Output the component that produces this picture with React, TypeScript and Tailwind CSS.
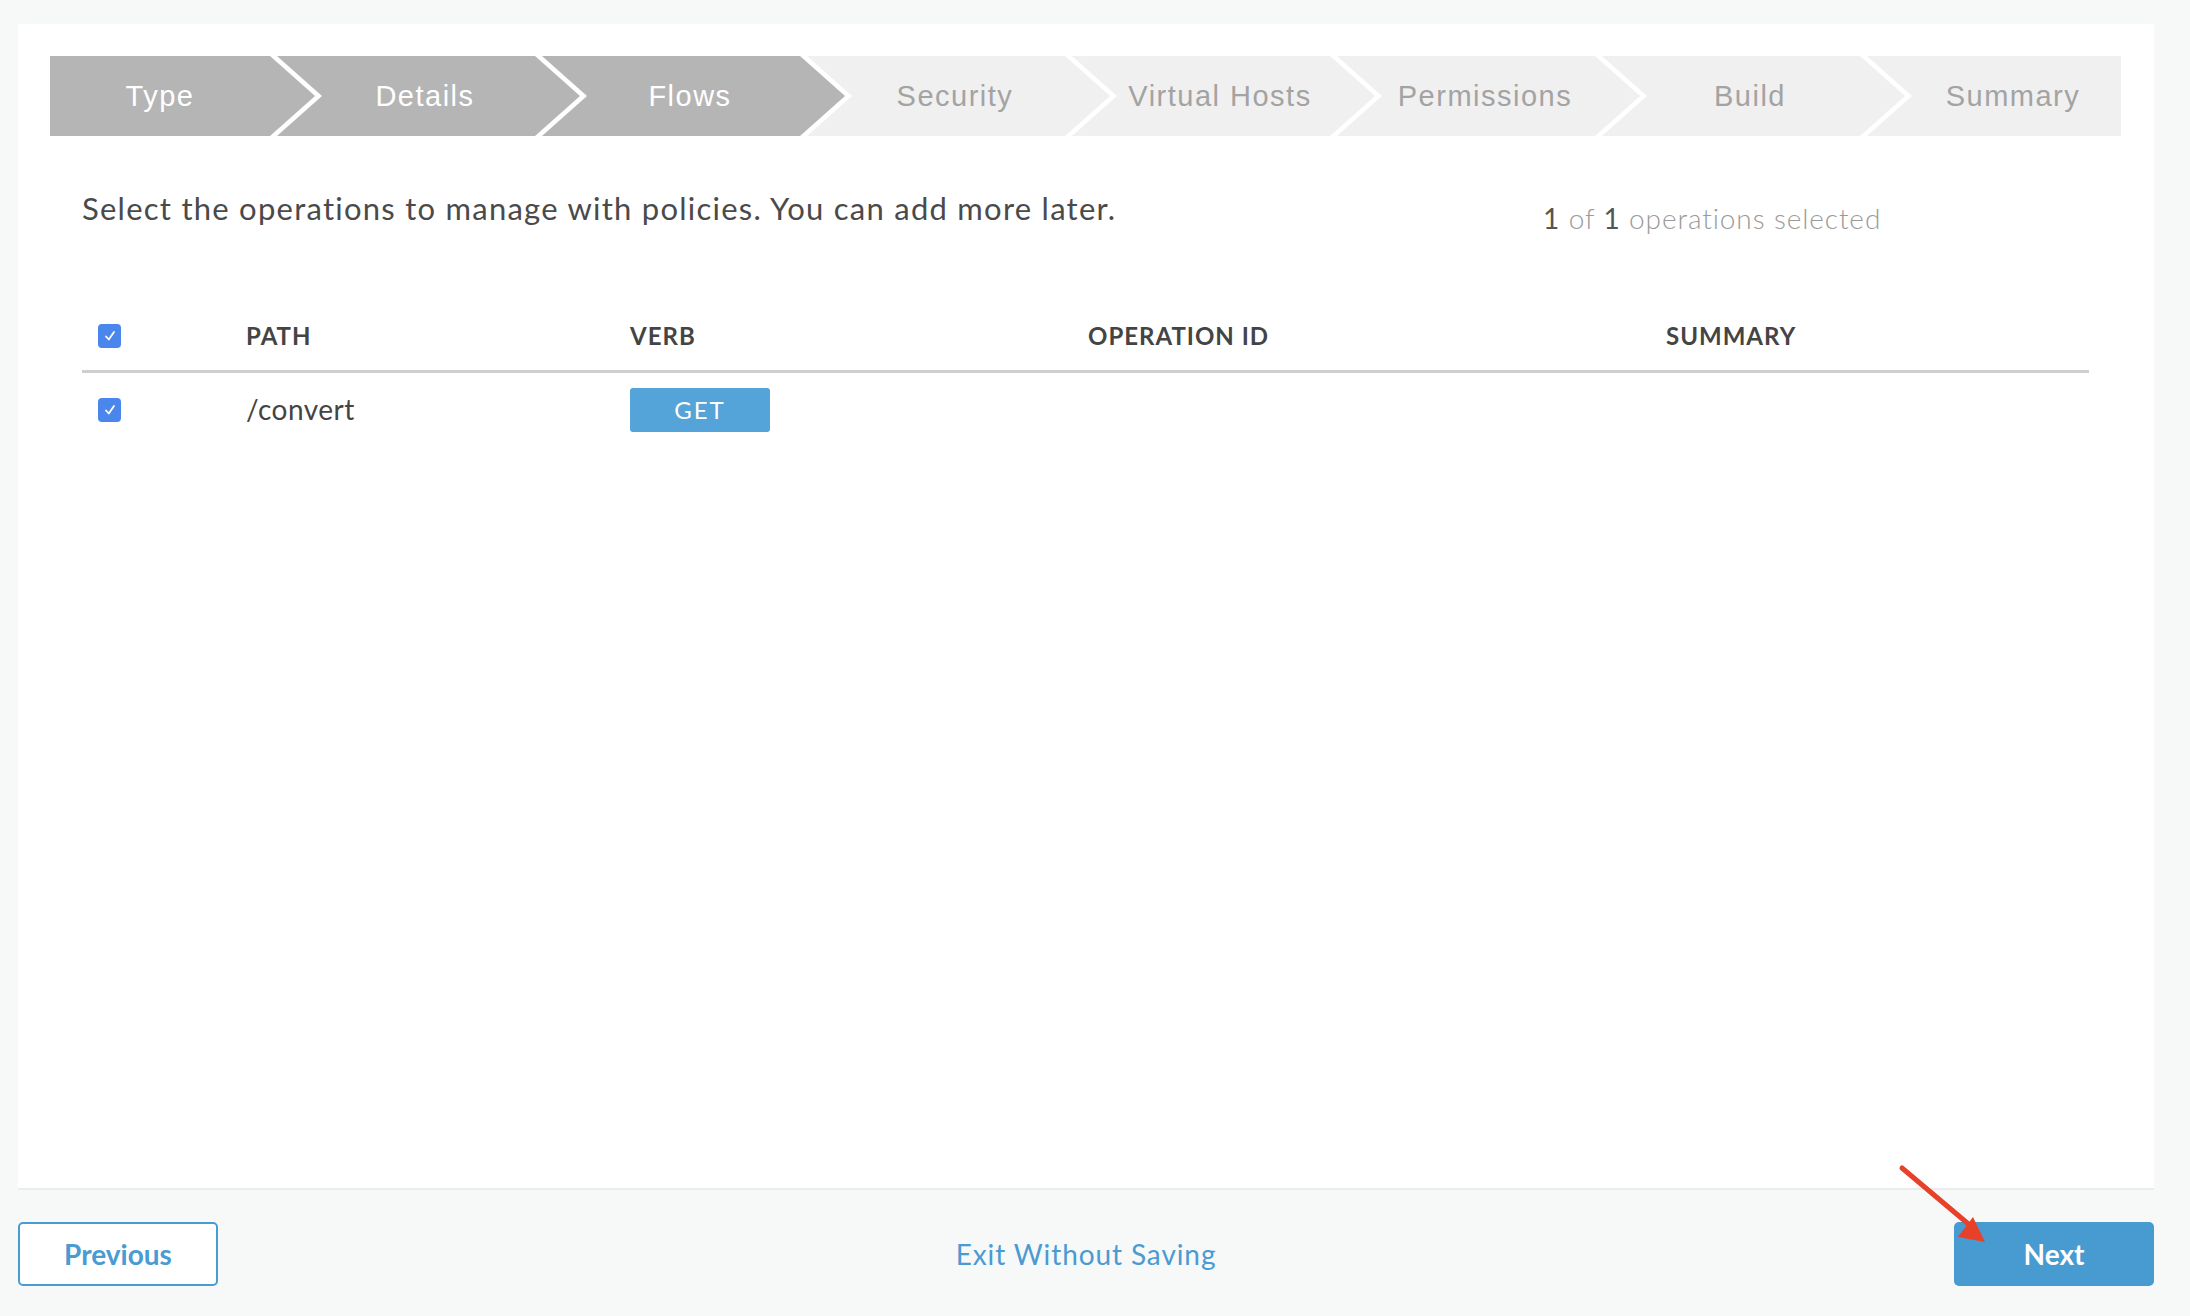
import React from 'react';

const steps = ['Type', 'Details', 'Flows', 'Security', 'Virtual Hosts', 'Permissions', 'Build', 'Summary'];
const doneCount = 3;

const CheckBox = () => (
  <div className="w-[23px] h-[24px] rounded-[4px] bg-[#4a86ec] flex items-center justify-center">
    <svg width="14" height="14" viewBox="0 0 14 14" fill="none">
      <path d="M3 7.5 L5.8 10.5 L11 3" stroke="white" strokeWidth="1.8" strokeLinecap="round" strokeLinejoin="round" />
    </svg>
  </div>
);

const Stepper = () => (
  <div className="flex h-[80px]">
    {steps.map((label, i) => {
      const done = i < doneCount;
      const color = done ? 'bg-[#b5b5b5] text-white' : 'bg-[#f0f0f0] text-[#a3a3a3]';
      // first / middle / last shape
      let shape = 'w-[303px] -ml-[38px] pl-[38px] pr-[45px] [clip-path:polygon(0_0,calc(100%_-_45px)_0,100%_50%,calc(100%_-_45px)_100%,0_100%,45px_50%)]';
      if (i === 0) shape = 'w-[265px] pr-[45px] [clip-path:polygon(0_0,calc(100%_-_45px)_0,100%_50%,calc(100%_-_45px)_100%,0_100%)]';
      if (i === steps.length - 1) shape = 'flex-1 -ml-[38px] pl-[38px] [clip-path:polygon(0_0,100%_0,100%_100%,0_100%,45px_50%)]';
      return (
        <div key={label} className={`${shape} ${color} shrink-0 flex items-center justify-center`}>
          <span className="font-['Liberation_Sans',Arial,sans-serif] text-[29px] tracking-[1.5px] mt-[2px]">{label}</span>
        </div>
      );
    })}
  </div>
);

export default function App() {
  return (
    <div className="relative w-full h-[1316px] bg-[#f7f8f8] overflow-hidden font-['Lato','Noto_Sans',sans-serif]">
      <div className="flex flex-col h-full pl-[18px] pr-[36px] pt-[24px]">
        {/* card */}
        <div className="h-[1166px] bg-white border-b-2 border-[#ececec] pt-[32px] pl-[32px] pr-[33px]">
          <Stepper />

          <div className="px-[32px]">
            <div className="flex items-start mt-[52px]">
              <p className="w-[1461px] text-[31px] leading-[40px] text-[#4a4a4a] tracking-[1.25px]">
                Select the operations to manage with policies. You can add more later.
              </p>
              <p className="mt-[10px] text-[28px] leading-[40px] text-[#9a9a9a] font-light tracking-[0.9px]">
                <span className="text-[#555] font-normal">1</span> of <span className="text-[#555] font-normal">1</span> operations selected
              </p>
            </div>

            {/* table */}
            <div className="mt-[80px]">
              <div className="grid grid-cols-[164px_384px_458px_578px_1fr] items-center pb-[16px] border-b-[3px] border-[#cdcfd1] text-[24px] font-bold text-[#444] tracking-[1px]">
                <div className="pl-[16px]"><CheckBox /></div>
                <div>PATH</div>
                <div>VERB</div>
                <div>OPERATION ID</div>
                <div>SUMMARY</div>
              </div>
              <div className="grid grid-cols-[164px_384px_458px_578px_1fr] items-center pt-[15px]">
                <div className="pl-[16px]"><CheckBox /></div>
                <div className="text-[28px] text-[#444] tracking-[0.5px] -mt-[2px]">/convert</div>
                <div>
                  <div className="w-[140px] h-[44px] rounded-[3px] bg-[#54a3d9] flex items-center justify-center text-white text-[24px] tracking-[2px]">
                    GET
                  </div>
                </div>
                <div />
                <div />
              </div>
            </div>
          </div>
        </div>

        {/* footer */}
        <div className="flex items-center justify-between mt-[32px]">
          <button className="w-[200px] h-[64px] rounded-[5px] border-2 border-[#4a9bd1] bg-white text-[#4a9bd1] text-[28px] font-bold">
            Previous
          </button>
          <button className="text-[28px] text-[#4a9bd1] tracking-[0.9px]">Exit Without Saving</button>
          <button className="w-[200px] h-[64px] rounded-[5px] bg-[#479bd0] text-white text-[28px] font-bold">
            Next
          </button>
        </div>
      </div>

      {/* annotation arrow */}
      <svg className="absolute left-[1890px] top-[1155px]" width="110" height="100" viewBox="0 0 110 100">
        <line x1="12" y1="13" x2="82" y2="72" stroke="#e8412a" strokeWidth="5" strokeLinecap="round" />
        <polygon points="68,82 83,62 95,87" fill="#e8412a" />
      </svg>
    </div>
  );
}
